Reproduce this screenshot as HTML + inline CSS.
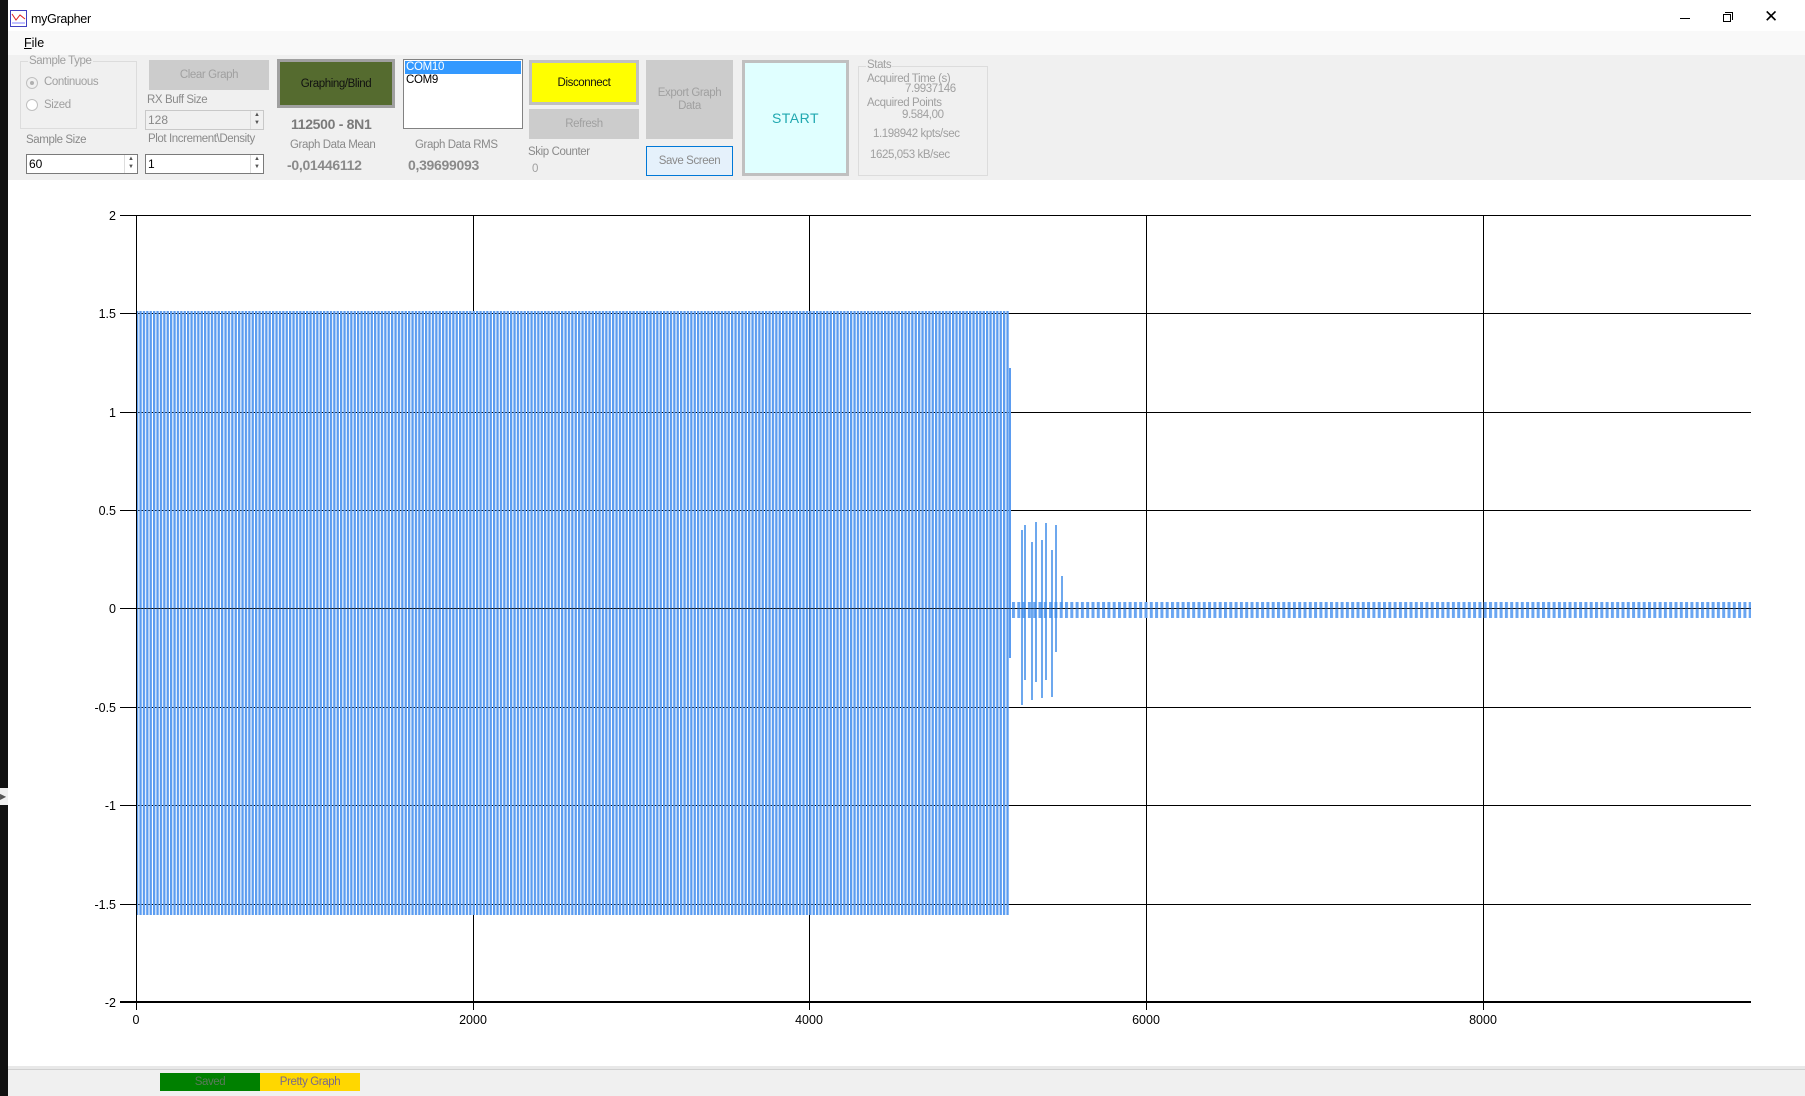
<!DOCTYPE html>
<html><head><meta charset="utf-8"><style>
*{margin:0;padding:0;box-sizing:border-box}
body{width:1805px;height:1096px;position:relative;overflow:hidden;background:#fff;font-family:"Liberation Sans",sans-serif;}
.a{position:absolute;white-space:nowrap}
.t{font-size:11.5px;color:#a0a0a0;letter-spacing:-0.4px}
.l{font-size:11.5px;color:#6d6d6d;letter-spacing:-0.4px}
.btn{position:absolute;display:flex;align-items:center;justify-content:center;text-align:center;font-size:11.5px;letter-spacing:-0.4px}
.inp{position:absolute;background:#fff;border:1px solid #7a7a7a;font-size:12px;padding-left:2px;line-height:18px}
.spin{position:absolute;right:0;top:0;width:13px;height:100%;border-left:1px solid #ddd;font-size:6px;color:#555;line-height:8px;text-align:center}
</style></head><body>
<div class="a" style="left:0;top:0;width:1805px;height:31px;background:#fff"></div>
<svg class="a" style="left:10px;top:10px" width="17" height="17"><rect x="0.5" y="0.5" width="16" height="16" fill="#fff" stroke="#4040c0"/><polyline points="2,4 6,10 10,5 15,9" fill="none" stroke="#e02020"/><line x1="2" y1="13" x2="15" y2="13" stroke="#8080ff"/></svg>
<div class="a" style="left:31px;top:12px;font-size:12.5px;color:#000;letter-spacing:-0.3px">myGrapher</div>
<div class="a" style="left:1680px;top:18px;width:10px;height:1px;background:#000"></div>
<div class="a" style="left:1723px;top:14px;width:8px;height:8px;border:1px solid #000;background:#fff"></div>
<div class="a" style="left:1725px;top:12px;width:8px;height:8px;border-top:1px solid #000;border-right:1px solid #000"></div>
<div class="a" style="left:1764px;top:7px;font-size:17px;color:#000">✕</div>
<div class="a" style="left:0;top:31px;width:1805px;height:24px;background:#f9f9f9"></div>
<div class="a" style="left:24px;top:36px;font-size:12.5px;color:#000"><u>F</u>ile</div>
<div class="a" style="left:0;top:55px;width:1805px;height:125px;background:#f0f0f0"></div>

<div class="a" style="left:20px;top:61px;width:117px;height:68px;border:1px solid #dcdcdc"></div>
<div class="a t" style="left:28px;top:55px;background:#f0f0f0;padding:0 1px">Sample Type</div>
<div class="a" style="left:26px;top:77px;width:12px;height:12px;border-radius:50%;border:1px solid #c0c0c0;background:#f0f0f0"><div style="margin:3px;width:4px;height:4px;border-radius:50%;background:#b0b0b0"></div></div>
<div class="a t" style="left:44px;top:76px">Continuous</div>
<div class="a" style="left:26px;top:99px;width:12px;height:12px;border-radius:50%;border:1px solid #c0c0c0;background:#fff"></div>
<div class="a t" style="left:44px;top:99px">Sized</div>
<div class="a l" style="left:26px;top:134px;color:#8a8a8a">Sample Size</div>
<div class="inp" style="left:26px;top:154px;width:112px;height:20px">60<div class="spin">▲<br>▼</div></div>

<div class="btn" style="left:149px;top:60px;width:120px;height:30px;background:#cccccc;color:#a0a0a0">Clear Graph</div>
<div class="a t" style="left:147px;top:94px;color:#8a8a8a">RX Buff Size</div>
<div class="inp" style="left:145px;top:110px;width:119px;height:20px;background:#f0f0f0;border-color:#c8c8c8;color:#888">128<div class="spin">▲<br>▼</div></div>
<div class="a t" style="left:148px;top:133px;color:#8a8a8a">Plot Increment\Density</div>
<div class="inp" style="left:145px;top:154px;width:119px;height:20px">1<div class="spin">▲<br>▼</div></div>

<div class="btn" style="left:277px;top:59px;width:118px;height:49px;background:#556b2f;border:3px solid #a0a0a0;color:#111">Graphing/Blind</div>
<div class="a" style="left:291px;top:116px;font-size:14px;font-weight:bold;color:#7a7a7a;letter-spacing:-0.3px">112500 - 8N1</div>
<div class="a t" style="left:290px;top:139px;color:#8a8a8a">Graph Data Mean</div>
<div class="a" style="left:287px;top:157px;font-size:14px;font-weight:bold;color:#8a8a8a;letter-spacing:-0.3px">-0,01446112</div>

<div class="a" style="left:403px;top:59px;width:120px;height:70px;background:#fff;border:1px solid #828282"></div>
<div class="a" style="left:405px;top:61px;width:116px;height:13px;background:#3399ff;color:#fff;font-size:11.5px;line-height:13px;padding-left:1px;letter-spacing:-0.3px">COM10</div>
<div class="a" style="left:406px;top:74px;font-size:11.5px;color:#000;letter-spacing:-0.3px">COM9</div>
<div class="a t" style="left:415px;top:139px;color:#8a8a8a">Graph Data RMS</div>
<div class="a" style="left:408px;top:157px;font-size:14px;font-weight:bold;color:#8a8a8a;letter-spacing:-0.3px">0,39699093</div>

<div class="btn" style="left:529px;top:60px;width:110px;height:45px;background:#ffff00;border:3px solid #c0c0c0;color:#111">Disconnect</div>
<div class="btn" style="left:529px;top:109px;width:110px;height:30px;background:#cccccc;color:#a0a0a0">Refresh</div>
<div class="a t" style="left:528px;top:146px;color:#8a8a8a">Skip Counter</div>
<div class="a t" style="left:532px;top:163px">0</div>

<div class="btn" style="left:646px;top:60px;width:87px;height:79px;background:#cccccc;color:#a0a0a0;line-height:13px">Export Graph<br>Data</div>
<div class="btn" style="left:646px;top:146px;width:87px;height:30px;background:#e5f1fb;border:1px solid #0078d7;color:#8a8a8a">Save Screen</div>

<div class="btn" style="left:742px;top:60px;width:107px;height:116px;background:#e0ffff;border:3px solid #c0c0c0;color:#20a8b0;font-size:14px;letter-spacing:0.5px">START</div>

<div class="a" style="left:858px;top:66px;width:130px;height:110px;border:1px solid #dcdcdc"></div>
<div class="a t" style="left:866px;top:59px;background:#f0f0f0;padding:0 1px">Stats</div>
<div class="a t" style="left:867px;top:73px">Acquired Time (s)</div>
<div class="a t" style="left:905px;top:83px">7.9937146</div>
<div class="a t" style="left:867px;top:97px">Acquired Points</div>
<div class="a t" style="left:902px;top:109px">9.584,00</div>
<div class="a t" style="left:873px;top:128px">1.198942 kpts/sec</div>
<div class="a t" style="left:870px;top:149px">1625,053 kB/sec</div>

<svg class="a" style="left:0;top:180px" width="1805" height="889" viewBox="0 180 1805 889">
<defs>
<pattern id="p" x="136" y="0" width="3.4" height="10" patternUnits="userSpaceOnUse"><rect width="2.3" height="10" fill="#5b9cf0"/></pattern>
<pattern id="q" x="1012" y="0" width="5.3" height="10" patternUnits="userSpaceOnUse"><rect width="3" height="10" fill="#6aa6f2"/></pattern>
</defs>
<g stroke="#000" stroke-width="1">
<line x1="120" y1="215.5" x2="1751" y2="215.5"/><line x1="120" y1="313.5" x2="1751" y2="313.5"/><line x1="120" y1="412.5" x2="1751" y2="412.5"/><line x1="120" y1="510.5" x2="1751" y2="510.5"/><line x1="120" y1="608.5" x2="1751" y2="608.5"/><line x1="120" y1="707.5" x2="1751" y2="707.5"/><line x1="120" y1="805.5" x2="1751" y2="805.5"/><line x1="120" y1="904.5" x2="1751" y2="904.5"/>
<line x1="473.5" y1="215" x2="473.5" y2="1010"/><line x1="809.5" y1="215" x2="809.5" y2="1010"/><line x1="1146.5" y1="215" x2="1146.5" y2="1010"/><line x1="1483.5" y1="215" x2="1483.5" y2="1010"/>
</g>
<rect x="137" y="311" width="872" height="604" fill="url(#p)"/>
<rect x="1009" y="368" width="2" height="290" fill="#5b9cf0"/>
<rect x="1012" y="602" width="739" height="16" fill="url(#q)"/>
<g stroke="#3d8be8" stroke-width="1.5">
<line x1="1022" y1="530" x2="1022" y2="705"/><line x1="1025" y1="525" x2="1025" y2="680"/><line x1="1032" y1="542" x2="1032" y2="700"/><line x1="1036" y1="522" x2="1036" y2="682"/><line x1="1042" y1="540" x2="1042" y2="698"/><line x1="1046" y1="523" x2="1046" y2="680"/><line x1="1052" y1="550" x2="1052" y2="697"/><line x1="1056" y1="525" x2="1056" y2="652"/><line x1="1062" y1="576" x2="1062" y2="608"/>
</g>
<g stroke="#000"><line x1="136.5" y1="215" x2="136.5" y2="1010"/><line x1="120" y1="1002" x2="1751" y2="1002" stroke-width="2"/><line x1="136" y1="608.5" x2="1751" y2="608.5" stroke-opacity="0.6"/></g>
<g font-family="Liberation Sans" font-size="12.5" fill="#000" text-anchor="end">
<text x="116" y="220">2</text><text x="116" y="318">1.5</text><text x="116" y="417">1</text><text x="116" y="515">0.5</text><text x="116" y="613">0</text><text x="116" y="712">-0.5</text><text x="116" y="810">-1</text><text x="116" y="909">-1.5</text><text x="116" y="1007">-2</text>
</g>
<g font-family="Liberation Sans" font-size="12.5" fill="#000" text-anchor="middle">
<text x="136" y="1024">0</text><text x="473" y="1024">2000</text><text x="809" y="1024">4000</text><text x="1146" y="1024">6000</text><text x="1483" y="1024">8000</text>
</g>
</svg>

<div class="a" style="left:0;top:1066px;width:1805px;height:4px;background:#e8e8e8"></div>
<div class="a" style="left:0;top:1069px;width:1805px;height:27px;background:#f0f0f0;border-top:1px solid #d0d0d0"></div>
<div class="btn" style="left:160px;top:1073px;width:100px;height:18px;background:#008000;color:#5a7a5a">Saved</div>
<div class="btn" style="left:260px;top:1073px;width:100px;height:18px;background:#ffd700;color:#7a6a8a">Pretty Graph</div>
<div class="a" style="left:0;top:0;width:8px;height:1096px;background:#111"></div>
<div class="a" style="left:0;top:788px;width:8px;height:17px;background:#f0f0f0;font-size:8px;color:#555;line-height:17px">▶</div>
</body></html>
